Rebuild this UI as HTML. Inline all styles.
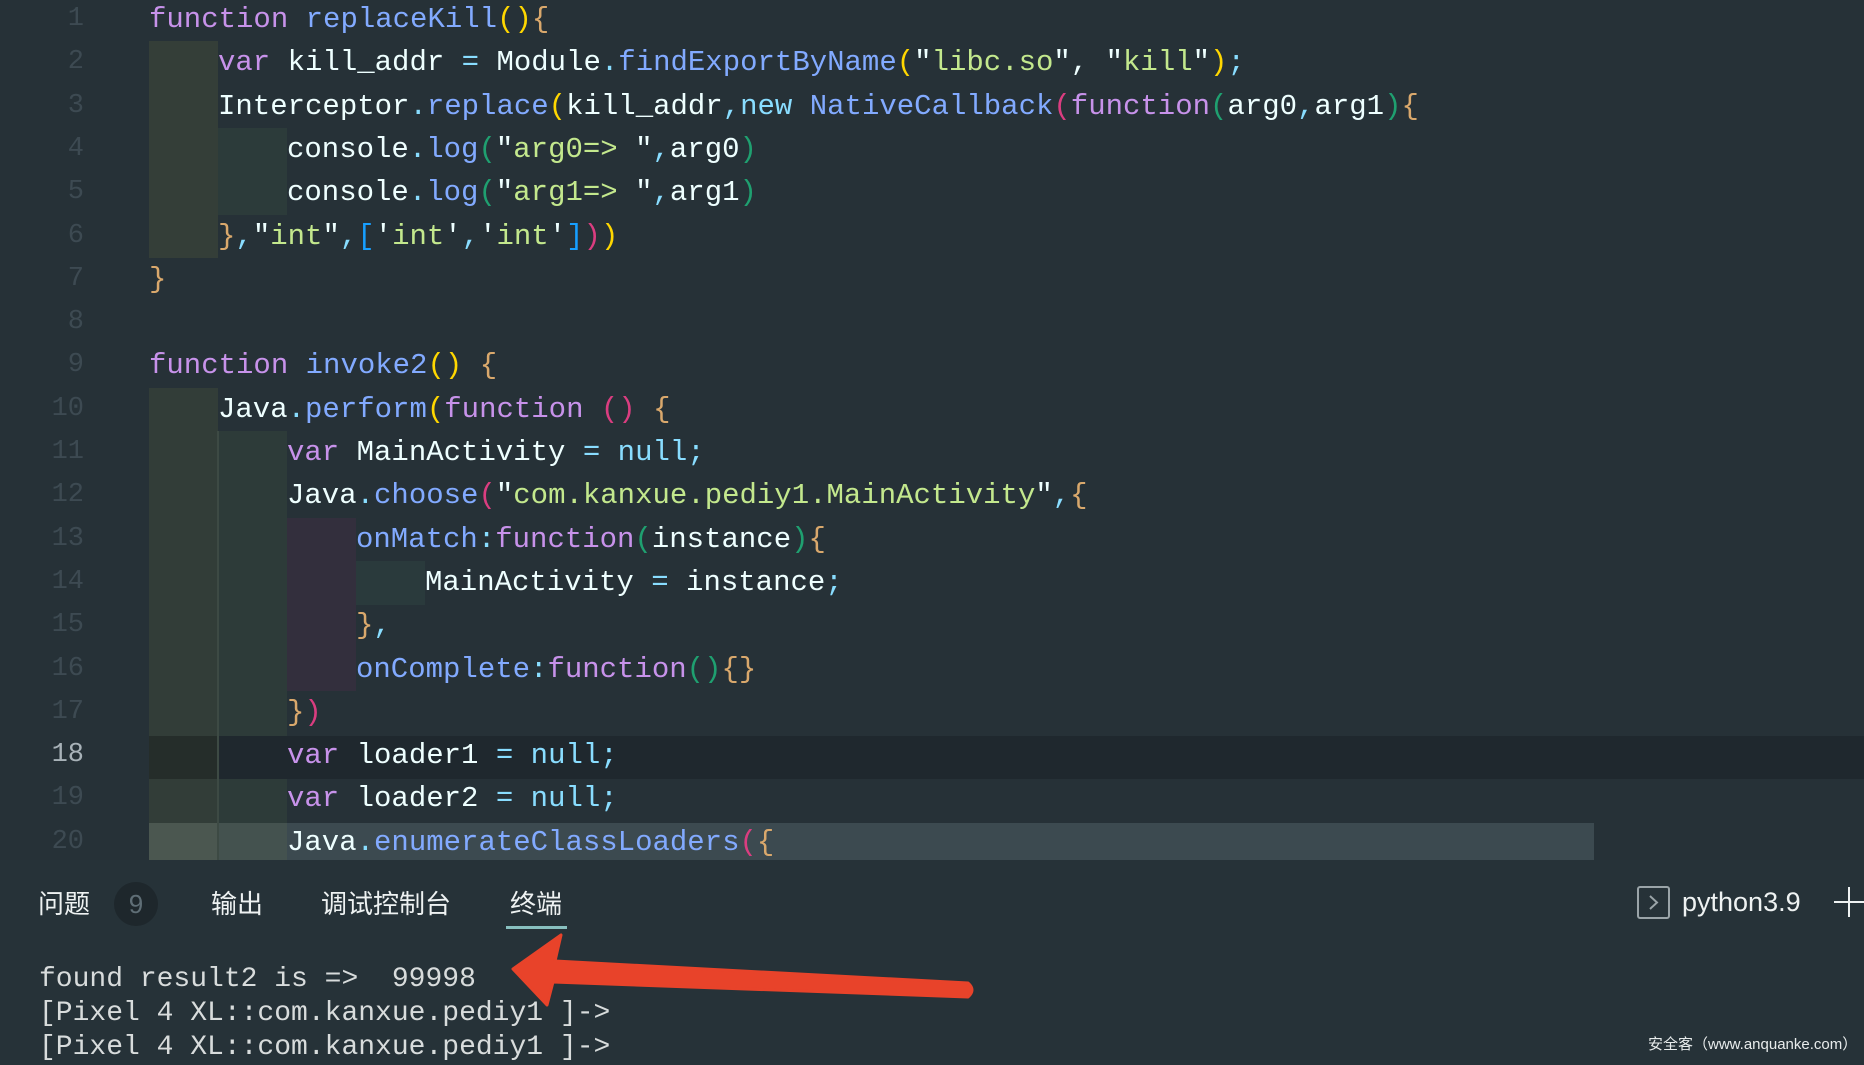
<!DOCTYPE html>
<html><head><meta charset="utf-8"><style>
*{margin:0;padding:0;box-sizing:border-box}
body{width:1864px;height:1062px;background:#263238;overflow:hidden;position:relative;font-family:"Liberation Mono",monospace}
.ed{position:absolute;left:0;top:0;width:1864px;height:860px;background:#263137;overflow:hidden}
.in{position:absolute;left:0;top:3px;width:1864px;height:860px}
.blk{position:absolute}
.ln{position:absolute;left:0;width:84px;text-align:right;font-size:27px;color:#3d4a52;line-height:43.3px}
.cl{position:absolute;font-size:29px;line-height:43.3px;white-space:pre;color:#eeffff}
.P{color:#c792ea}.B{color:#82aaff}.C{color:#89ddff}.G{color:#c3e88d}.Y{color:#ffd700}.K{color:#da3d80}.T{color:#1fa070}.R{color:#d9a86c}.L{color:#179fff}
.tab{position:absolute;top:882px;font-family:"Liberation Sans","Noto Sans CJK SC",sans-serif;font-size:26px;color:#eef2f2;line-height:44px}
.term{position:absolute;left:39px;font-size:28px;color:#d8dcdc;white-space:pre;line-height:34px}
</style></head><body>
<div class="ed"><div class="in">
<div class="blk" style="left:149px;top:733px;width:1715px;height:43px;background:#1f282e"></div>
<div class="blk" style="left:149px;top:820px;width:1445px;height:40px;background:#3c4a50"></div>
<div class="blk" style="left:149px;top:38px;width:69px;height:217px;background:#343e38"></div>
<div class="blk" style="left:218px;top:125px;width:69px;height:87px;background:#2c3b3a"></div>
<div class="blk" style="left:149px;top:385px;width:69px;height:348px;background:#323d38"></div>
<div class="blk" style="left:149px;top:733px;width:69px;height:43px;background:#252d2a"></div>
<div class="blk" style="left:149px;top:776px;width:69px;height:44px;background:#323d38"></div>
<div class="blk" style="left:149px;top:820px;width:69px;height:40px;background:#4b5750"></div>
<div class="blk" style="left:217px;top:428px;width:2px;height:432px;background:#3d4a44"></div>
<div class="blk" style="left:219px;top:428px;width:68px;height:305px;background:#2d3b39"></div>
<div class="blk" style="left:219px;top:776px;width:68px;height:44px;background:#2d3b39"></div>
<div class="blk" style="left:219px;top:820px;width:68px;height:40px;background:#44524f"></div>
<div class="blk" style="left:287px;top:515px;width:69px;height:173px;background:#332f3d"></div>
<div class="blk" style="left:356px;top:558px;width:69px;height:44px;background:#2a3a3c"></div>

<div class="ln" style="top:-5px">1</div>
<div class="ln" style="top:38.3px">2</div>
<div class="ln" style="top:81.6px">3</div>
<div class="ln" style="top:124.9px">4</div>
<div class="ln" style="top:168.2px">5</div>
<div class="ln" style="top:211.5px">6</div>
<div class="ln" style="top:254.8px">7</div>
<div class="ln" style="top:298.1px">8</div>
<div class="ln" style="top:341.4px">9</div>
<div class="ln" style="top:384.7px">10</div>
<div class="ln" style="top:428px">11</div>
<div class="ln" style="top:471.3px">12</div>
<div class="ln" style="top:514.6px">13</div>
<div class="ln" style="top:557.9px">14</div>
<div class="ln" style="top:601.2px">15</div>
<div class="ln" style="top:644.5px">16</div>
<div class="ln" style="top:687.8px">17</div>
<div class="ln" style="top:731.1px;color:#a8b2b8">18</div>
<div class="ln" style="top:774.4px">19</div>
<div class="ln" style="top:817.7px">20</div>

<div class="cl" style="left:149px;top:-5px"><span class="P">function</span> <span class="B">replaceKill</span><span class="Y">()</span><span class="R">{</span></div>
<div class="cl" style="left:218px;top:38.3px"><span class="P">var</span> kill_addr <span class="C">=</span> Module<span class="C">.</span><span class="B">findExportByName</span><span class="Y">(</span>"<span class="G">libc.so</span>", "<span class="G">kill</span>"<span class="Y">)</span><span class="C">;</span></div>
<div class="cl" style="left:218px;top:81.6px">Interceptor<span class="C">.</span><span class="B">replace</span><span class="Y">(</span>kill_addr<span class="C">,new</span> <span class="B">NativeCallback</span><span class="K">(</span><span class="P">function</span><span class="T">(</span>arg0<span class="C">,</span>arg1<span class="T">)</span><span class="R">{</span></div>
<div class="cl" style="left:287px;top:124.9px">console<span class="C">.</span><span class="B">log</span><span class="T">(</span>"<span class="G">arg0=&gt; </span>"<span class="C">,</span>arg0<span class="T">)</span></div>
<div class="cl" style="left:287px;top:168.2px">console<span class="C">.</span><span class="B">log</span><span class="T">(</span>"<span class="G">arg1=&gt; </span>"<span class="C">,</span>arg1<span class="T">)</span></div>
<div class="cl" style="left:218px;top:211.5px"><span class="R">}</span><span class="C">,</span>"<span class="G">int</span>"<span class="C">,</span><span class="L">[</span>'<span class="G">int</span>'<span class="C">,</span>'<span class="G">int</span>'<span class="L">]</span><span class="K">)</span><span class="Y">)</span></div>
<div class="cl" style="left:149px;top:254.8px"><span class="R">}</span></div>
<div class="cl" style="left:149px;top:341.4px"><span class="P">function</span> <span class="B">invoke2</span><span class="Y">()</span> <span class="R">{</span></div>
<div class="cl" style="left:218px;top:384.7px">Java<span class="C">.</span><span class="B">perform</span><span class="Y">(</span><span class="P">function</span> <span class="K">()</span> <span class="R">{</span></div>
<div class="cl" style="left:287px;top:428px"><span class="P">var</span> MainActivity <span class="C">=</span> <span class="C">null;</span></div>
<div class="cl" style="left:287px;top:471.3px">Java<span class="C">.</span><span class="B">choose</span><span class="K">(</span>"<span class="G">com.kanxue.pediy1.MainActivity</span>"<span class="C">,</span><span class="R">{</span></div>
<div class="cl" style="left:356px;top:514.6px"><span class="B">onMatch</span><span class="C">:</span><span class="P">function</span><span class="T">(</span>instance<span class="T">)</span><span class="R">{</span></div>
<div class="cl" style="left:425px;top:557.9px">MainActivity <span class="C">=</span> instance<span class="C">;</span></div>
<div class="cl" style="left:356px;top:601.2px"><span class="R">}</span><span class="C">,</span></div>
<div class="cl" style="left:356px;top:644.5px"><span class="B">onComplete</span><span class="C">:</span><span class="P">function</span><span class="T">()</span><span class="R">{}</span></div>
<div class="cl" style="left:287px;top:687.8px"><span class="R">}</span><span class="K">)</span></div>
<div class="cl" style="left:287px;top:731.1px"><span class="P">var</span> loader1 <span class="C">=</span> <span class="C">null;</span></div>
<div class="cl" style="left:287px;top:774.4px"><span class="P">var</span> loader2 <span class="C">=</span> <span class="C">null;</span></div>
<div class="cl" style="left:287px;top:817.7px">Java<span class="C">.</span><span class="B">enumerateClassLoaders</span><span class="K">(</span><span class="R">{</span></div>
</div></div>

<div class="tab" style="left:38px">问题</div>
<div style="position:absolute;left:114px;top:882px;width:44px;height:44px;border-radius:50%;background:#1e272c;color:#5f6e76;font-family:'Liberation Sans',sans-serif;font-size:26px;text-align:center;line-height:44px">9</div>
<div class="tab" style="left:211px">输出</div>
<div class="tab" style="left:321px">调试控制台</div>
<div class="tab" style="left:510px">终端</div>
<div style="position:absolute;left:506px;top:926px;width:61px;height:3px;background:#88c0bf"></div>

<div style="position:absolute;left:1637px;top:886px;width:33px;height:33px;border:2px solid #9aa4a8;border-radius:3px"></div>
<svg style="position:absolute;left:1637px;top:886px" width="33" height="33"><path d="M13 10 L20 16.5 L13 23" fill="none" stroke="#9aa4a8" stroke-width="2"/></svg>
<div style="position:absolute;left:1682px;top:887px;font-family:'Liberation Sans',sans-serif;font-size:27px;color:#eef2f2">python3.9</div>
<svg style="position:absolute;left:1833px;top:885px" width="31" height="34"><path d="M16 2 V32 M1 17 H31" stroke="#eef2f2" stroke-width="2"/></svg>

<div class="term" style="top:963px">found result2 is =&gt;  99998</div>
<div class="term" style="top:997px">[Pixel 4 XL::com.kanxue.pediy1 ]-&gt;</div>
<div class="term" style="top:1031px">[Pixel 4 XL::com.kanxue.pediy1 ]-&gt;</div>

<svg style="position:absolute;left:0;top:0" width="1864" height="1062"><path d="M513 969 L561 935 L555 961 L968 983 Q976 990 968 997 L553 982 L547 1005 Z" fill="#e8432a" stroke="#e8432a" stroke-width="3" stroke-linejoin="round"/></svg>

<div style="position:absolute;left:1648px;top:1033px;font-family:'Liberation Sans','Noto Sans CJK SC',sans-serif;font-size:15px;color:#e8ecec">安全客（www.anquanke.com）</div>
</body></html>
